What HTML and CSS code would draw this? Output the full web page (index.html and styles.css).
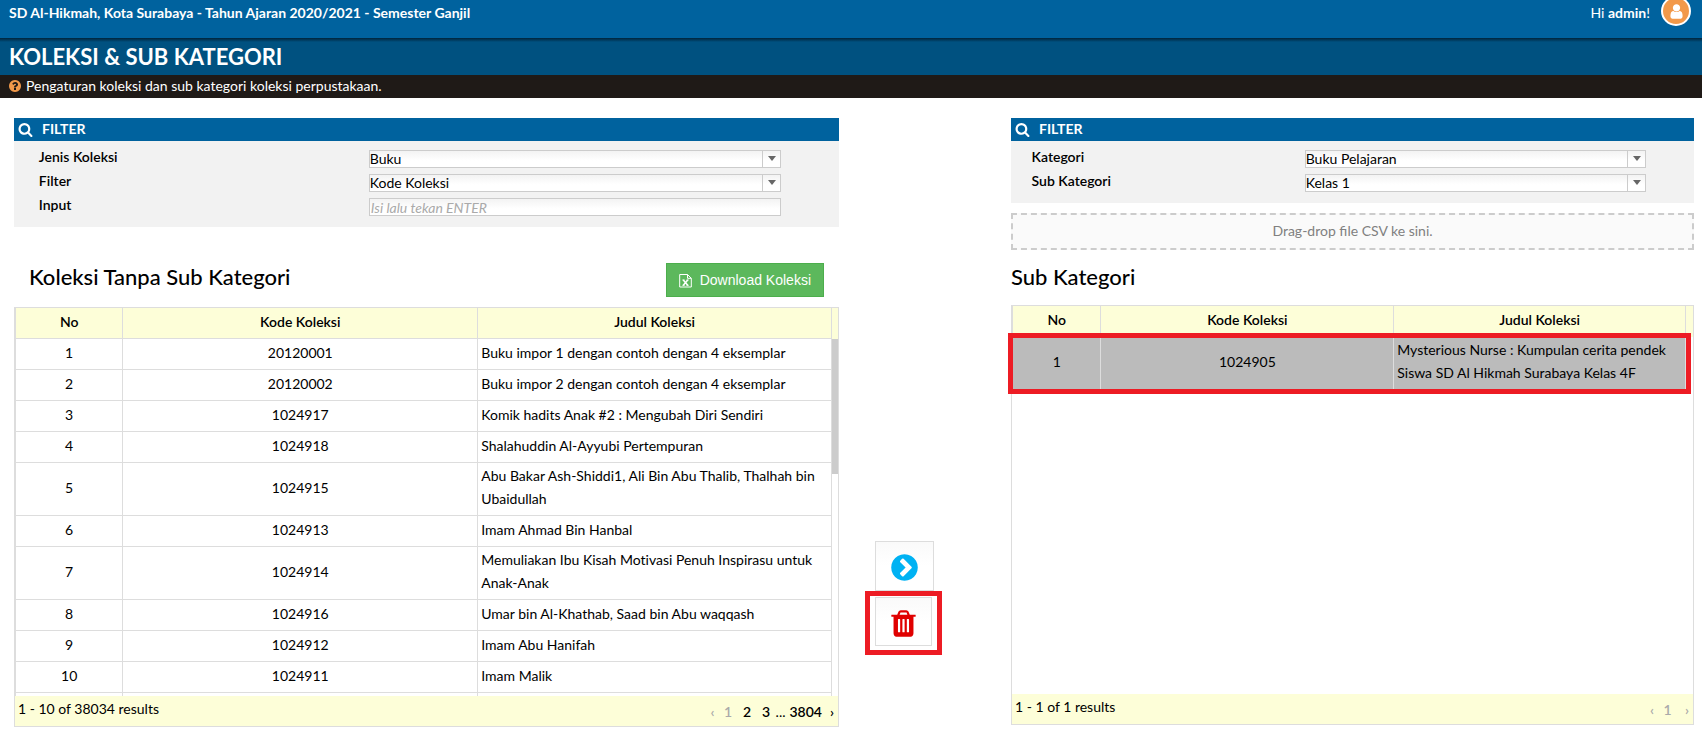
FILE: index.html
```html
<!DOCTYPE html>
<html lang="id">
<head>
<meta charset="utf-8">
<meta name="viewport" content="width=device-width, initial-scale=1">
<title>Koleksi &amp; Sub Kategori</title>
<link rel="stylesheet" href="styles.css">
</head>
<body>
<svg class="sprite" aria-hidden="true">
  <symbol id="i-search" viewBox="0 0 1792 1792"><path d="M1216 832q0-185-131.5-316.5t-316.5-131.5-316.5 131.5-131.5 316.5 131.5 316.5 316.5 131.5 316.5-131.5 131.5-316.5zm512 832q0 52-38 90t-90 38q-54 0-90-38l-343-342q-179 124-399 124-143 0-273.5-55.5t-225-150-150-225-55.5-273.5 55.5-273.5 150-225 225-150 273.5-55.5 273.5 55.5 225 150 150 225 55.5 273.5q0 220-124 399l343 343q37 37 37 90z"/></symbol>
</svg>
<header class="topbar">
  <strong class="school">SD Al-Hikmah, Kota Surabaya - Tahun Ajaran 2020/2021 - Semester Ganjil</strong>
  <div class="account">
    <span>Hi <b>admin</b>!</span>
    <a class="avatar" href="#" aria-label="Akun"><svg viewBox="0 0 1792 1792"><path d="M1536 1399q0 109-62.5 187t-150.5 78h-854q-88 0-150.5-78t-62.5-187q0-85 8.5-160.5t31.5-152 58.5-131 94-89 134.5-34.5q131 128 313 128t313-128q76 0 134.5 34.5t94 89 58.5 131 31.5 152 8.5 160.5zm-256-887q0 159-112.5 271.5t-271.5 112.5-271.5-112.5-112.5-271.5 112.5-271.5 271.5-112.5 271.5 112.5 112.5 271.5z"/></svg></a>
  </div>
</header>
<div class="titlebar"><h1>KOLEKSI &amp; SUB KATEGORI</h1></div>
<p class="hint"><svg class="hint-icon" viewBox="0 0 1792 1792"><path d="M1024 1376v-192q0-14-9-23t-23-9h-192q-14 0-23 9t-9 23v192q0 14 9 23t23 9h192q14 0 23-9t9-23zm256-672q0-88-55.5-163t-138.5-116-170-41q-243 0-371 213-15 24 8 42l132 100q7 6 19 6 16 0 25-12 53-68 86-92 34-24 86-24 48 0 85.5 26t37.5 59q0 38-20 61t-68 45q-63 28-115.5 86.5t-52.5 125.5v36q0 14 9 23t23 9h192q14 0 23-9t9-23q0-19 21.5-49.5t54.5-49.5q32-18 49-28.5t46-35 44.5-48 28-60.5 12.5-81zm384 192q0 209-103 385.5t-279.5 279.5-385.5 103-385.5-103-279.5-279.5-103-385.5 103-385.5 279.5-279.5 385.5-103 385.5 103 279.5 279.5 103 385.5z"/></svg>Pengaturan koleksi dan sub kategori koleksi perpustakaan.</p>

<main class="content">
  <section class="pane">
    <form class="filter">
      <h2 class="filter-title"><svg><use href="#i-search"/></svg>FILTER</h2>
      <div class="fields">
        <label for="jenis">Jenis Koleksi</label>
        <div class="select"><select id="jenis"><option>Buku</option></select></div>
        <label for="filter">Filter</label>
        <div class="select"><select id="filter"><option>Kode Koleksi</option></select></div>
        <label for="input">Input</label>
        <input id="input" type="text" placeholder="Isi lalu tekan ENTER">
      </div>
    </form>
    <div class="heading heading-source">
      <h2>Koleksi Tanpa Sub Kategori</h2>
      <button class="download" type="button"><svg viewBox="0 0 13 15" fill="none" stroke="currentColor"><path d="M.7 1.500h7.800l3.800 3.800v8.700h-11.600zM8.500 1.500v3.800h3.800"/><path stroke-width="1.500" d="M4.300 7l4.400 5.200M8.700 7l-4.400 5.200"/><path d="M3.400 7h2.200M7.500 7h2.200M3.400 12.300h2.200M7.500 12.300h2.200"/></svg>Download Koleksi</button>
    </div>
    <div class="grid">
      <div class="grid-view">
        <table>
          <colgroup><col class="c-no"><col class="c-code"><col></colgroup>
          <thead><tr><th>No</th><th>Kode Koleksi</th><th>Judul Koleksi</th></tr></thead>
          <tbody>
            <tr><td>1</td><td>20120001</td><td>Buku impor 1 dengan contoh dengan 4 eksemplar</td></tr>
            <tr><td>2</td><td>20120002</td><td>Buku impor 2 dengan contoh dengan 4 eksemplar</td></tr>
            <tr><td>3</td><td>1024917</td><td>Komik hadits Anak #2 : Mengubah Diri Sendiri</td></tr>
            <tr><td>4</td><td>1024918</td><td>Shalahuddin Al-Ayyubi Pertempuran</td></tr>
            <tr><td>5</td><td>1024915</td><td>Abu Bakar Ash-Shiddi1, Ali Bin Abu Thalib, Thalhah bin Ubaidullah</td></tr>
            <tr><td>6</td><td>1024913</td><td>Imam Ahmad Bin Hanbal</td></tr>
            <tr><td>7</td><td>1024914</td><td>Memuliakan Ibu Kisah Motivasi Penuh Inspirasu untuk Anak-Anak</td></tr>
            <tr><td>8</td><td>1024916</td><td>Umar bin Al-Khathab, Saad bin Abu waqqash</td></tr>
            <tr><td>9</td><td>1024912</td><td>Imam Abu Hanifah</td></tr>
            <tr><td>10</td><td>1024911</td><td>Imam Malik</td></tr>
            <tr><td></td><td></td><td></td></tr>
          </tbody>
        </table>
        <div class="gutter"><div class="thumb"></div></div>
      </div>
      <footer class="grid-footer">
        <span>1 - 10 of 38034 results</span>
        <nav class="pager" aria-label="Halaman koleksi"><span class="prev off">‹</span><span class="off num">1</span><a class="num" href="#">2</a><a class="num" href="#">3</a><span class="dots">...</span><a href="#">3804</a><a class="next" href="#">›</a></nav>
      </footer>
    </div>
  </section>

  <div class="actions">
    <button class="action move" type="button" aria-label="Pindahkan"><svg viewBox="0 0 1792 1792"><path d="M845 1395l454-454q19-19 19-45t-19-45l-454-454q-19-19-45-19t-45 19l-102 102q-19 19-19 45t19 45l307 307-307 307q-19 19-19 45t19 45l102 102q19 19 45 19t45-19zm819-499q0 209-103 385.500t-279.500 279.500-385.500 103-385.500-103-279.500-279.500-103-385.500 103-385.500 279.500-279.500 385.500-103 385.500 103 279.500 279.500 103 385.500z"/></svg></button>
    <button class="action remove" type="button" aria-label="Hapus"><svg viewBox="0 0 1792 1792"><path d="M704 1376v-704q0-14-9-23t-23-9h-64q-14 0-23 9t-9 23v704q0 14 9 23t23 9h64q14 0 23-9t9-23zm256 0v-704q0-14-9-23t-23-9h-64q-14 0-23 9t-9 23v704q0 14 9 23t23 9h64q14 0 23-9t9-23zm256 0v-704q0-14-9-23t-23-9h-64q-14 0-23 9t-9 23v704q0 14 9 23t23 9h64q14 0 23-9t9-23zm-544-992h448l-48-117q-7-9-17-11h-317q-10 2-17 11zm928 32v64q0 14-9 23t-23 9h-96v948q0 83-47 143.500t-113 60.500h-832q-66 0-113-58.500t-47-141.500v-952h-96q-14 0-23-9t-9-23v-64q0-14 9-23t23-9h309l70-167q15-37 54-63t79-26h320q40 0 79 26t54 63l70 167h309q14 0 23 9t9 23z"/></svg></button>
  </div>

  <section class="pane pane-target">
    <form class="filter">
      <h2 class="filter-title"><svg><use href="#i-search"/></svg>FILTER</h2>
      <div class="fields">
        <label for="kategori">Kategori</label>
        <div class="select"><select id="kategori"><option>Buku Pelajaran</option></select></div>
        <label for="sub">Sub Kategori</label>
        <div class="select"><select id="sub"><option>Kelas 1</option></select></div>
      </div>
    </form>
    <div class="dropzone">Drag-drop file CSV ke sini.</div>
    <div class="heading heading-target"><h2>Sub Kategori</h2></div>
    <div class="grid">
      <div class="grid-view grid-open">
        <table>
          <colgroup><col class="c-no"><col class="c-code"><col></colgroup>
          <thead><tr><th>No</th><th>Kode Koleksi</th><th>Judul Koleksi</th></tr></thead>
          <tbody>
            <tr class="selected"><td>1</td><td>1024905</td><td>Mysterious Nurse : Kumpulan cerita pendek Siswa SD Al Hikmah Surabaya Kelas 4F</td></tr>
          </tbody>
        </table>
        <div class="gutter"></div>
      </div>
      <footer class="grid-footer">
        <span>1 - 1 of 1 results</span>
        <nav class="pager" aria-label="Halaman sub kategori"><span class="prev off">‹</span><span class="off num">1</span><span class="next off">›</span></nav>
      </footer>
    </div>
  </section>
</main>
</body>
</html>
```
FILE: styles.css
```css
* { box-sizing: border-box; }

body {
  display: flex;
  flex-direction: column;
  height: 100vh;
  min-height: 600px;
  margin: 0;
  background: #fff;
  color: #000;
  font: 14px/23px Lato, "Open Sans", sans-serif;
}

h1, h2, p { margin: 0; }
a { color: inherit; text-decoration: none; }
button, input, select { font: inherit; color: inherit; }
svg { fill: currentColor; flex: none; }
.sprite { position: absolute; width: 0; height: 0; }

.topbar {
  display: flex;
  justify-content: space-between;
  height: 38px;
  flex: none;
  padding: 1px 11px 0 9px;
  background: #00629e;
  color: #fff;
}
.school, .account b { font-weight: 700; }
.account { display: flex; gap: 11px; }
.avatar {
  display: flex;
  align-items: center;
  justify-content: center;
  width: 30px;
  height: 30px;
  margin-top: -5px;
  border: 2px solid #fff;
  border-radius: 50%;
  background: #f2994a;
}
.avatar svg { width: 17px; height: 17px; }

.titlebar {
  flex: none;
  padding: 4px 9px 3px;
  background: linear-gradient(#00253c, #003a5d 2px, #005180 4px);
  color: #fff;
}
h1 { font-size: 22px; line-height: 30px; font-weight: 700; }

.hint {
  display: flex;
  gap: 4px;
  height: 23px;
  flex: none;
  padding: 0 8px;
  background: #1f1a17;
  color: #fff;
  line-height: 21px;
}
.hint-icon { width: 14px; height: 14px; margin-top: 4px; fill: #f2994a; }

.content {
  display: grid;
  grid-template-columns: 825fr 172fr 683fr;
  flex: 1;
  min-height: 0;
  padding: 20px 8px 4px 14px;
}
.pane { display: flex; flex-direction: column; min-width: 0; min-height: 0; }
.pane-target { padding-bottom: 2px; }

.filter { background: #f2f2f2; }
.filter-title {
  display: flex;
  gap: 9px;
  height: 23px;
  padding-left: 4px;
  background: #00629e;
  color: #fff;
  font-size: 14px;
  line-height: 21px;
  font-weight: 700;
}
.filter-title svg { width: 15px; height: 15px; margin-top: 4px; }
.fields {
  display: grid;
  grid-template-columns: 43% 50%;
  row-gap: 6px;
  padding: 9px 0 11px;
}
.fields label { padding-left: 7%; line-height: 13px; font-weight: 600; }
.select { display: flex; position: relative; }
.select::before {
  content: "";
  position: absolute;
  top: 1px;
  right: 18px;
  bottom: 1px;
  border-left: 1px solid #ccc;
  pointer-events: none;
}
.select::after {
  content: "";
  position: absolute;
  top: 6px;
  right: 5px;
  border: 4px solid transparent;
  border-top: 5px solid #666;
  border-bottom: 0;
  pointer-events: none;
}
.fields select, .fields input {
  appearance: none;
  width: 100%;
  height: 18px;
  padding: 0;
  border: 1px solid #ccc;
  border-radius: 0;
  background: linear-gradient(#f3f3f3, #fff 60%);
  line-height: 16px;
}
.fields input { padding-left: 1px; }
.fields input::placeholder { color: #aaa; font-style: italic; }

.dropzone {
  height: 37px;
  flex: none;
  margin-top: 10px;
  padding: 5px 0;
  border: 2px dashed #ccc;
  background: #fafafa;
  color: #808080;
  line-height: 21px;
  text-align: center;
}

.heading { display: flex; align-items: flex-start; justify-content: space-between; height: 34px; flex: none; }
.heading h2 { font-size: 22px; line-height: 28px; font-weight: 500; }
.heading-source { margin: 36px 15px 10px; }
.heading-target { margin: 13px 0 8px; }
.download {
  display: flex;
  align-items: center;
  gap: 8px;
  height: 34px;
  padding: 0 12px;
  border: 1px solid #4cae4c;
  background: #5cb85c;
  color: #fff;
  font: 14px "Liberation Sans", Arial, sans-serif;
}
.download svg { width: 13px; height: 15px; fill: none; }

.grid {
  display: flex;
  flex-direction: column;
  flex: 1;
  min-height: 0;
  border: 1px solid #ddd;
}
.grid-view { display: flex; align-items: stretch; flex: 1; min-height: 0; overflow: hidden; }
.grid-open { overflow: visible; }
table {
  flex: 1;
  align-self: flex-start;
  table-layout: fixed;
  border-collapse: separate;
  border-spacing: 0;
  border-left: 1px solid #ddd;
  font-variant-ligatures: none;
}
.c-no { width: 13.15%; }
.c-code { width: 43.5%; }
th, td {
  height: 31px;
  padding: 1px 3px 5px;
  border: 0 solid #ddd;
  border-width: 0 1px 1px 0;
  text-align: center;
}
th { background: #fdfed8; font-weight: 600; }
td:last-child { text-align: left; }
.selected { position: relative; background: #bbb; }
.selected::after {
  content: "";
  position: absolute;
  inset: -4px -5px -4px -5px;
  border: 5px solid #ed1c24;
  pointer-events: none;
}

.gutter { width: 6px; flex: none; border-top: 31px solid #fdfed8; }
.pane-target .gutter { width: 7px; }
.thumb { height: 135px; background: #ccc; }

.grid-footer {
  display: flex;
  justify-content: space-between;
  height: 30px;
  flex: none;
  padding: 1px 4px 0 3px;
  background: #fdfed8;
}
.pager { display: flex; padding-top: 3px; font-weight: 600; }
.num { width: 19px; text-align: center; }
.off { color: #aaa; }
.dots { padding: 0 4px 0 0; font-weight: 400; }
.prev { margin-right: 4px; }
.next { margin-left: 8px; }

.actions {
  display: flex;
  flex-direction: column;
  align-items: flex-start;
  justify-content: flex-end;
  gap: 6px;
  padding: 0 0 81px 36px;
}
.action {
  display: flex;
  align-items: center;
  justify-content: center;
  padding: 3px 0 0;
  border: 1px solid #ddd;
  background: linear-gradient(#fafafa, #fff 50%);
}
.action svg { width: 31px; height: 31px; }
.move { width: 59px; height: 50px; color: #00b2f3; }
.remove { position: relative; width: 57px; height: 49px; color: #e00000; }
.remove::after {
  content: "";
  position: absolute;
  inset: -7px -11px -10px;
  border: 5px solid #ed1c24;
}
```
